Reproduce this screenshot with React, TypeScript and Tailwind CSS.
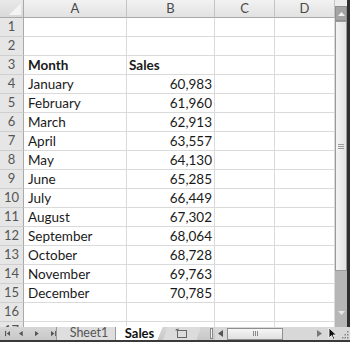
import React from "react";

const COLS = ["A", "B", "C", "D"];
const WIDTHS = ["w-[103px]", "w-[88px]", "w-[60px]", "w-[60px]"];

const ROWS: [string, string, boolean?][] = [
  ["", ""],
  ["", ""],
  ["Month", "Sales", true],
  ["January", "60,983"],
  ["February", "61,960"],
  ["March", "62,913"],
  ["April", "63,557"],
  ["May", "64,130"],
  ["June", "65,285"],
  ["July", "66,449"],
  ["August", "67,302"],
  ["September", "68,064"],
  ["October", "68,728"],
  ["November", "69,763"],
  ["December", "70,785"],
  ["", ""],
  ["", ""],
];

function CornerCell() {
  return (
    <div className="relative h-[18px] w-[24px] shrink-0 border-b border-r border-[#a9a9a9] bg-gradient-to-b from-[#e9e9e9] to-[#d9d9d9]">
      <svg className="absolute bottom-[2px] right-[2px]" width="12" height="12" viewBox="0 0 12 12">
        <polygon points="12,0 12,12 0,12" fill="#f4f4f4" />
      </svg>
    </div>
  );
}

function VScrollbar() {
  return (
    <div className="flex w-[12px] shrink-0 flex-col bg-[#c9c9c9]">
      <div className="h-[6px] bg-[#ececec]" />
      <div className="flex h-[15px] items-center justify-center border border-[#8f8f8f] bg-[#a4a4a4]">
        <svg width="7" height="4" viewBox="0 0 7 4">
          <polygon points="3.5,0 7,4 0,4" fill="#f4f4f4" />
        </svg>
      </div>
      <div className="flex h-[250px] items-center justify-center border border-[#9a9a9a] bg-gradient-to-r from-[#f4f4f4] to-[#e2e2e2]">
        <div className="flex flex-col gap-[1px]">
          <div className="h-px w-[6px] bg-[#9a9a9a]" />
          <div className="h-px w-[6px] bg-[#9a9a9a]" />
          <div className="h-px w-[6px] bg-[#9a9a9a]" />
        </div>
      </div>
      <div className="flex-1 bg-[#b6b6b6]" />
      <div className="flex h-[16px] items-center justify-center bg-[#b6b6b6]">
        <svg width="7" height="4" viewBox="0 0 7 4">
          <polygon points="0,0 7,0 3.5,4" fill="#e8e8e8" />
        </svg>
      </div>
      <div className="h-[6px] bg-[#b6b6b6]" />
    </div>
  );
}

function NavArrows() {
  return (
    <div className="flex w-[56px] shrink-0 items-center gap-[6px] pl-[5px]">
      <svg width="7" height="7" viewBox="0 0 7 7">
        <rect x="0" y="0" width="1.5" height="7" fill="#555" />
        <polygon points="7,0 7,7 2.5,3.5" fill="#555" />
      </svg>
      <svg className="ml-[3px]" width="5" height="7" viewBox="0 0 5 7">
        <polygon points="5,0 5,7 0,3.5" fill="#555" />
      </svg>
      <svg className="ml-[6px]" width="5" height="7" viewBox="0 0 5 7">
        <polygon points="0,0 0,7 5,3.5" fill="#555" />
      </svg>
      <svg className="ml-[6px]" width="7" height="7" viewBox="0 0 7 7">
        <polygon points="0,0 0,7 4.5,3.5" fill="#555" />
        <rect x="5.5" y="0" width="1.5" height="7" fill="#555" />
      </svg>
    </div>
  );
}

function TabBar() {
  return (
    <div className="flex h-[15px] items-stretch border-b-2 border-[#3a3a3a] bg-gradient-to-b from-[#d6d6d6] to-[#c8c8c8] font-['Lato',sans-serif]">
      <NavArrows />
      <div className="w-px bg-[#9a9a9a]" />
      <div className="flex w-[59px] items-center justify-center border-r border-[#9a9a9a] bg-[#dedede] pl-[6px] text-[12.5px] leading-none text-[#555]">
        Sheet1
      </div>
      <div className="-mt-px flex w-[47px] items-center justify-center bg-white text-[13px] font-bold leading-none text-[#111] [clip-path:polygon(0_0,100%_0,88%_100%,0_100%)]">
        Sales
      </div>
      <div className="flex w-[38px] items-center justify-center bg-[#dcdcdc] [clip-path:polygon(12%_0,100%_0,88%_100%,0_100%)]">
        <svg width="14" height="11" viewBox="0 0 14 11">
          <rect x="2.5" y="2.5" width="9" height="7" fill="none" stroke="#666" />
          <path d="M1 1 L3 3 M3 0.5 V2.5 M0.5 2 H3" stroke="#666" />
        </svg>
      </div>
      <div className="w-[6px]" />
      <div className="flex w-[8px] items-center justify-center">
        <div className="h-[11px] w-[3px] border border-[#8a8a8a] bg-[#f2f2f2]" />
      </div>
      <div className="flex flex-1 items-center bg-[#d8d8d8]">
        <svg className="ml-[3px]" width="5" height="7" viewBox="0 0 5 7">
          <polygon points="5,0 5,7 0,3.5" fill="#555" />
        </svg>
        <div className="ml-[4px] flex h-[12px] w-[56px] items-center justify-center gap-[1px] border border-[#8f8f8f] bg-gradient-to-b from-[#f6f6f6] to-[#e0e0e0]">
          <div className="h-[5px] w-px bg-[#888]" />
          <div className="h-[5px] w-px bg-[#888]" />
          <div className="h-[5px] w-px bg-[#888]" />
        </div>
        <div className="flex-1" />
        <svg className="mr-[6px]" width="5" height="7" viewBox="0 0 5 7">
          <polygon points="0,0 0,7 5,3.5" fill="#777" />
        </svg>
        <svg width="10" height="13" viewBox="0 0 10 13">
          <polygon points="1,1 1,11 3.5,8.5 5.5,12.5 7,12 5,8 8.5,8" fill="#111" stroke="#fff" strokeWidth="0.8" />
        </svg>
        <svg className="ml-[2px] mr-[1px]" width="9" height="10" viewBox="0 0 9 10">
          <rect x="7" y="2" width="1.5" height="1.5" fill="#888" />
          <rect x="4.5" y="5" width="1.5" height="1.5" fill="#888" />
          <rect x="7" y="5" width="1.5" height="1.5" fill="#888" />
          <rect x="2" y="8" width="1.5" height="1.5" fill="#888" />
          <rect x="4.5" y="8" width="1.5" height="1.5" fill="#888" />
          <rect x="7" y="8" width="1.5" height="1.5" fill="#888" />
        </svg>
      </div>
    </div>
  );
}

export default function App() {
  return (
    <div className="flex h-[342px] w-[350px] flex-col overflow-hidden bg-white font-['Lato',sans-serif]">
      <div className="flex h-[327px] items-stretch">
        <div className="w-[335px] shrink-0 overflow-hidden">
          <div className="flex">
            <CornerCell />
            {COLS.map((c, i) => (
              <div
                key={c}
                className={`${WIDTHS[i]} flex h-[18px] shrink-0 items-center justify-center border-b border-r border-b-[#a9a9a9] border-r-[#c4c4c4] bg-gradient-to-b from-[#f2f2f2] to-[#e2e2e2] text-[13px] text-[#4a4a4a]`}
              >
                {c}
              </div>
            ))}
          </div>
          {ROWS.map(([a, b, bold], r) => (
            <div key={r} className="flex h-[19px]">
              <div className="flex w-[24px] shrink-0 items-center justify-center border-b border-r border-b-[#cfcfcf] border-r-[#a9a9a9] bg-[#e6e6e6] text-[13px] text-[#555]">
                {r + 1}
              </div>
              <div
                className={`flex w-[103px] shrink-0 items-center border-b border-r border-[#dadada] pl-[4px] text-[13.5px] text-[#1a1a1a] ${bold ? "font-bold" : ""}`}
              >
                {a}
              </div>
              <div
                className={`flex w-[88px] shrink-0 items-center border-b border-r border-[#dadada] text-[13.5px] text-[#1a1a1a] ${bold ? "justify-start pl-[2px] font-bold" : "justify-end pr-[2px]"}`}
              >
                {b}
              </div>
              <div className="w-[60px] shrink-0 border-b border-r border-[#dadada]" />
              <div className="w-[60px] shrink-0 border-b border-r border-[#dadada]" />
            </div>
          ))}
        </div>
        <VScrollbar />
        <div className="w-[3px] bg-[#2e2e2e]" />
      </div>
      <TabBar />
    </div>
  );
}
